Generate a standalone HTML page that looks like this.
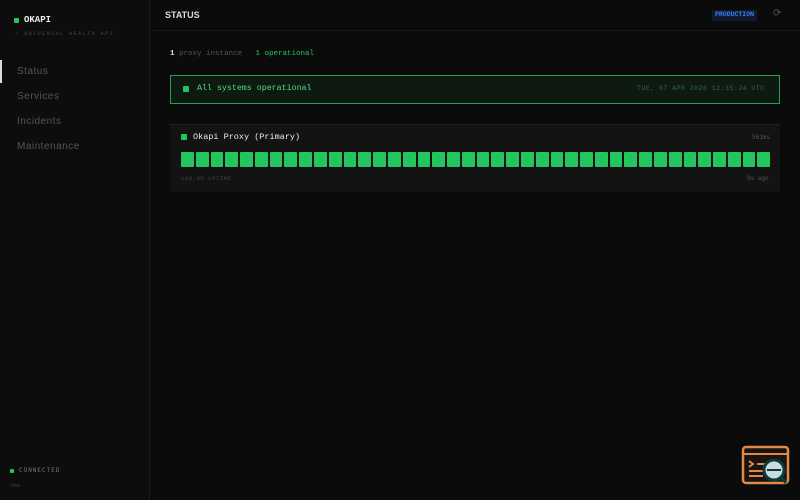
<!DOCTYPE html>
<html><head><style>
*{margin:0;padding:0;box-sizing:border-box}
body{width:800px;height:500px;background:#0b0b0b;font-family:"Liberation Mono",monospace;color:#ddd;position:relative;overflow:hidden}
.side{position:absolute;left:0;top:0;width:150px;height:500px;background:#0d0d0d;border-right:1px solid #1c1c1c}
.dot{position:absolute;width:6px;height:6px;background:#22c55e;border-radius:1px}
.abs{position:absolute;white-space:nowrap;line-height:1}
.nav{position:absolute;left:17px;font-size:10px;color:#555;font-family:"Liberation Sans",sans-serif;letter-spacing:.5px;line-height:1}
.bars{position:absolute;left:181px;top:152px;width:589px;height:15px;display:flex;gap:2px}
.bars div{flex:1;background:#22c55e;border-radius:1px}
</style></head><body>
<div class="side">
<div class="dot" style="left:14px;top:18px;width:5px;height:5px"></div>
<div class="abs" style="left:24px;top:16px;font-size:9px;font-weight:bold;color:#eee">OKAPI</div>
<div class="abs" style="left:15px;top:31px;font-size:5.5px;color:#444;letter-spacing:1.2px">/ UNIVERSAL HEALTH API</div>
<div style="position:absolute;left:0;top:60px;width:2px;height:23px;background:#ddd"></div>
<div class="nav" style="top:67px">Status</div>
<div class="nav" style="top:92px">Services</div>
<div class="nav" style="top:117px">Incidents</div>
<div class="nav" style="top:142px">Maintenance</div>
<div class="dot" style="left:10px;top:469px;width:4px;height:4px"></div>
<div class="abs" style="left:19px;top:468px;font-size:6px;color:#777;letter-spacing:1px">CONNECTED</div>
<div class="abs" style="left:10px;top:483px;font-size:5.5px;color:#444">/ms</div>
</div>
<div style="position:absolute;left:151px;top:0;width:649px;height:31px;border-bottom:1px solid #181818"></div>
<div class="abs" style="left:165px;top:11px;font-size:9px;color:#ddd;font-weight:bold;font-family:'Liberation Sans',sans-serif">STATUS</div>
<div class="abs" style="left:712px;top:10px;font-size:6.5px;color:#3b82f6;background:#0f1a2e;padding:2px 3px;font-weight:bold">PRODUCTION</div>
<div class="abs" style="left:773px;top:10px;font-size:10px;color:#555">⟳</div>
<div class="abs" style="left:170px;top:51px;font-size:7.5px;color:#555"><b style="color:#ddd">1</b> proxy instance &nbsp; <span style="color:#22c55e">1 operational</span></div>
<div style="position:absolute;left:170px;top:75px;width:610px;height:29px;border:1px solid #22a052;background:#0e1a11"></div>
<div class="dot" style="left:183px;top:86px"></div>
<div class="abs" style="left:197px;top:85px;font-size:8.3px;color:#4ade80">All systems operational</div>
<div class="abs" style="left:637px;top:86px;font-size:6.5px;color:#2f6a40;letter-spacing:.5px">TUE, 07 APR 2026 12:35:24 UTC</div>
<div style="position:absolute;left:170px;top:124px;width:610px;height:68px;background:#131313;border-top:1px solid #1f1f1f"></div>
<div class="dot" style="left:181px;top:134px"></div>
<div class="abs" style="left:193px;top:133px;font-size:8.5px;color:#eee">Okapi Proxy (Primary)</div>
<div class="abs" style="left:752px;top:135px;font-size:6px;color:#555">561ms</div>
<div class="bars"><div></div><div></div><div></div><div></div><div></div><div></div><div></div><div></div><div></div><div></div><div></div><div></div><div></div><div></div><div></div><div></div><div></div><div></div><div></div><div></div><div></div><div></div><div></div><div></div><div></div><div></div><div></div><div></div><div></div><div></div><div></div><div></div><div></div><div></div><div></div><div></div><div></div><div></div><div></div><div></div></div>
<div class="abs" style="left:181px;top:176px;font-size:5.5px;color:#444;letter-spacing:.6px">100.0% UPTIME</div>
<div class="abs" style="left:747px;top:176px;font-size:6px;color:#555">9s ago</div>
<svg style="position:absolute;left:740px;top:444px" width="52" height="44" viewBox="0 0 52 44">
<rect x="3" y="3" width="45" height="36" rx="3" fill="#1a1410" stroke="#e08a4a" stroke-width="2.5"/>
<line x1="3" y1="10" x2="48" y2="10" stroke="#e08a4a" stroke-width="2"/>
<path d="M9 17l4 3-4 3M9 27h14M9 32h14M17 20h10" stroke="#e08a4a" stroke-width="2" fill="none"/>
<circle cx="34" cy="26" r="10" fill="#c9dde0" stroke="#0d3a3a" stroke-width="3"/>
<line x1="27" y1="26" x2="41" y2="26" stroke="#0d3a3a" stroke-width="2"/>
<line x1="41" y1="33" x2="46" y2="39" stroke="#0d3a3a" stroke-width="3"/>
</svg>
</body></html>
